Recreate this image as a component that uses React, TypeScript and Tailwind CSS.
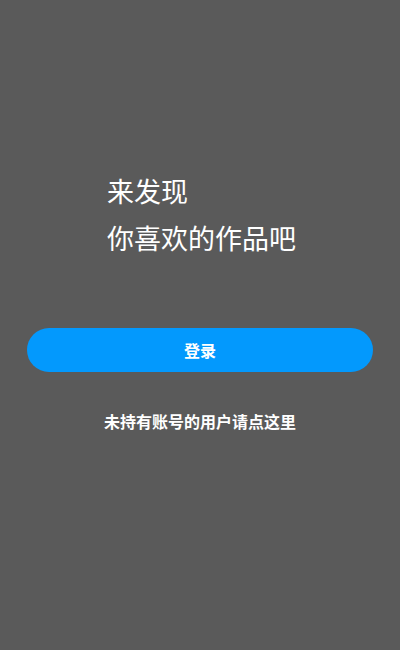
import React from "react";

const App: React.FC = () => {
  return (
    <div
      className="h-[650px] w-full bg-[#5a5a5a] flex flex-col text-white"
      style={{ fontFamily: '"Noto Sans CJK SC", "Noto Sans", sans-serif' }}
    >
      {/* Heading */}
      <div className="pt-[167px] pl-[107px] text-[27px] leading-[47px]">
        <p>来发现</p>
        <p>你喜欢的作品吧</p>
      </div>

      {/* Login */}
      <div className="px-[27px] mt-[67px]">
        <button className="w-full h-[44px] rounded-full bg-[#0399fd] text-[16px] font-bold">
          登录
        </button>
      </div>

      <div className="mt-[35px] text-center text-[16px] font-bold leading-[28px]">
        未持有账号的用户请点这里
      </div>
    </div>
  );
};

export default App;
